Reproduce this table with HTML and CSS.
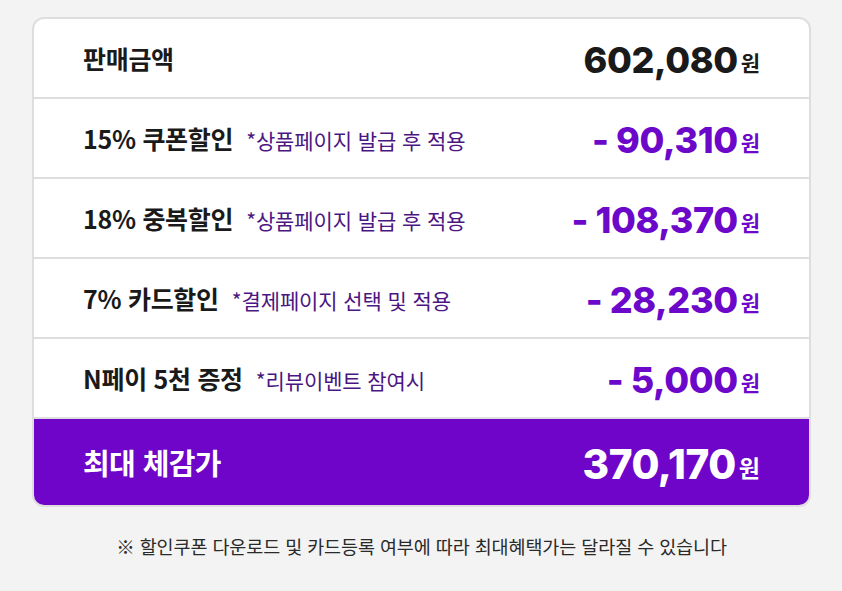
FILE: index.html
```html
<!DOCTYPE html>
<html lang="ko">
<head>
<meta charset="utf-8">
<link rel="stylesheet" href="styles.css">
</head>
<body>
<div class="page">
  <div class="card">
    <div class="row">
      <div class="label"><span class="title">판매금액</span></div>
      <div class="amount"><span class="num">602,080</span><span class="won">원</span></div>
    </div>
    <div class="row">
      <div class="label"><span class="title">15% 쿠폰할인</span><span class="note">*상품페이지 발급 후 적용</span></div>
      <div class="amount discount"><span class="num">- 90,310</span><span class="won">원</span></div>
    </div>
    <div class="row">
      <div class="label"><span class="title">18% 중복할인</span><span class="note">*상품페이지 발급 후 적용</span></div>
      <div class="amount discount"><span class="num">- 108,370</span><span class="won">원</span></div>
    </div>
    <div class="row">
      <div class="label"><span class="title">7% 카드할인</span><span class="note">*결제페이지 선택 및 적용</span></div>
      <div class="amount discount"><span class="num">- 28,230</span><span class="won">원</span></div>
    </div>
    <div class="row">
      <div class="label"><span class="title">N페이 5천 증정</span><span class="note">*리뷰이벤트 참여시</span></div>
      <div class="amount discount"><span class="num">- 5,000</span><span class="won">원</span></div>
    </div>
    <div class="row total">
      <div class="label"><span class="title">최대 체감가</span></div>
      <div class="amount"><span class="num">370,170</span><span class="won">원</span></div>
    </div>
  </div>
  <p class="footnote">※ 할인쿠폰 다운로드 및 카드등록 여부에 따라 최대혜택가는 달라질 수 있습니다</p>
</div>
</body>
</html>
```
FILE: styles.css
```css
html, body {
  margin: 0;
  padding: 0;
  background: #f3f3f3;
}
body {
  font-family: "Noto Sans CJK KR", "Noto Sans", sans-serif;
  color: #1a1a1a;
}
.page {
  padding: 17px 31px 0 32px;
}
.card {
  width: 775px;
  border: 2px solid #dedede;
  border-radius: 12px;
  background: #fff;
  overflow: hidden;
}
.row {
  height: 78px;
  display: flex;
  align-items: center;
  justify-content: space-between;
  padding: 0 49px 0 49px;
  border-bottom: 2px solid #dedede;
}
.row.total {
  height: 86px;
  border-bottom: none;
  background: #6f05c9;
  color: #fff;
}
.label {
  display: flex;
  align-items: baseline;
  gap: 13px;
}
.title {
  font-size: 25px;
  font-weight: 700;
  letter-spacing: -0.3px;
}
.note {
  font-size: 21px;
  color: #4b1682;
  letter-spacing: -0.1px;
}
.amount {
  white-space: nowrap;
  margin-top: 4px;
}
.num {
  font-family: Inter, "Liberation Sans", sans-serif;
  font-weight: 800;
  font-size: 36px;
  letter-spacing: -0.4px;
}
.won {
  font-size: 21px;
  font-weight: 700;
  margin-left: 3px;
  vertical-align: 2px;
}
.discount {
  color: #6c08c9;
}
.total .title {
  font-size: 29px;
  letter-spacing: -0.6px;
}
.total .num {
  font-size: 40.5px;
}
.total .won {
  font-size: 23px;
}
.footnote {
  margin: 26px 0 0;
  text-align: center;
  font-size: 18.5px;
  color: #2a2a2a;
  letter-spacing: -0.1px;
}
```
